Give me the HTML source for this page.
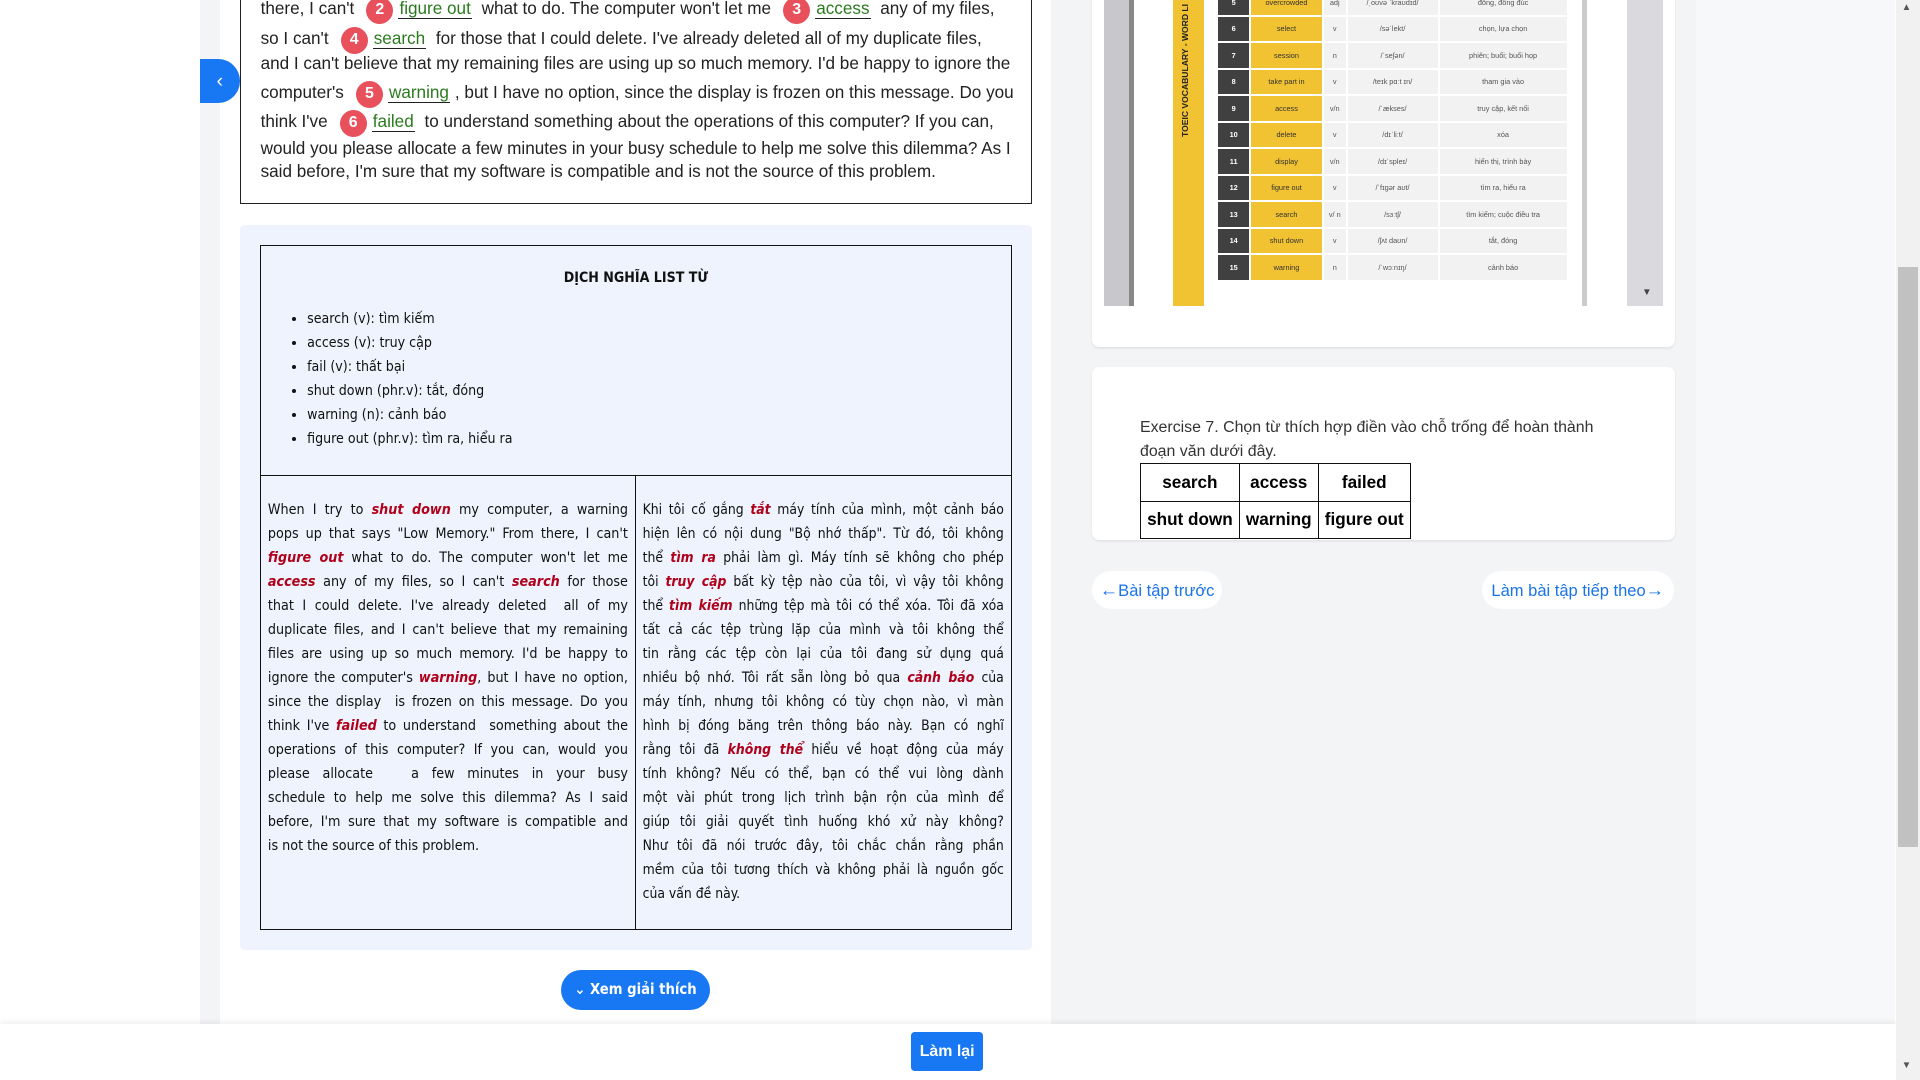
<!DOCTYPE html>
<html><head><meta charset="utf-8">
<style>
html,body{margin:0;padding:0;}
body{width:1920px;height:1080px;overflow:hidden;background:#fff;font-family:"Liberation Sans",sans-serif;}
#w{width:1568px;height:882px;position:relative;zoom:1.2244898;overflow:hidden;background:#fff;}
.abs{position:absolute;}
.gs{background:#f3f4f6;}
.cond{font-family:"DejaVu Sans Condensed","Liberation Sans Narrow","Liberation Sans",sans-serif;}
.pass{left:196px;top:-10px;width:645px;height:176px;border:1px solid #222;border-top:none;background:#fff;}
.pl{position:absolute;left:16px;white-space:nowrap;font-size:14px;line-height:20px;color:#222;}
.num{display:inline-block;width:22px;height:22px;border-radius:50%;background:#e8505b;color:#fff;font-weight:bold;font-size:13px;text-align:center;line-height:22px;margin:0 4px 0 6px;vertical-align:0;}
.ans{color:#2a7a1e;border-bottom:1px solid #222;padding:0 1px;}
.panel{left:196px;top:184px;width:647px;height:592px;background:#eef3fd;border-radius:4px;}
.tbl{left:212px;top:200px;width:613px;height:558px;border:1px solid #111;}
.hdr{position:absolute;left:0;top:0;width:613px;height:187px;border-bottom:1px solid #111;}
.hdr h4{margin:0;position:absolute;top:20px;width:100%;text-align:center;font-size:11.5px;font-weight:bold;color:#111;}
.hdr ul{position:absolute;top:50px;left:20px;margin:0;padding-left:18px;font-size:11.5px;line-height:19.6px;color:#111;}
.col{position:absolute;top:206px;font-size:11.6px;line-height:19.6px;color:#111;}
.col div{text-align:justify;text-align-last:justify;height:19.6px;overflow:hidden;}
.col div.l{text-align-last:left;}
.col b{color:#b0001a;font-style:italic;}
.vline{position:absolute;left:306px;top:188px;width:1px;height:370px;background:#111;}
.btn{background:#1877f2;color:#fff;font-weight:bold;font-size:12px;text-align:center;white-space:nowrap;}
.card{background:#fff;border-radius:6px;box-shadow:0 1px 2px rgba(0,0,0,.08);}
.vt td{height:20px;font-size:6px;text-align:center;color:#555;background:#f2f2f2;border-bottom:2px solid #fff;border-right:2px solid #fff;padding:0;white-space:nowrap;}
.vt td.n{background:#404040;color:#fff;font-weight:bold;width:25px;}
.vt td.y{background:#f1c232;color:#333;width:58px;}
.ex td{border:1px solid #111;font-weight:bold;font-size:14px;text-align:center;padding:0 5px;height:30px;}
.nav{background:#fff;border-radius:16px;color:#1a73e8;font-size:13.5px;line-height:31px;height:31px;text-align:center;white-space:nowrap;}
.nav i{font-style:normal;font-weight:bold;font-size:15px;}
</style></head><body><div id="w">
<div class="abs gs" style="left:163px;top:0;width:17px;height:836px"></div>
<div class="abs gs" style="left:858px;top:0;width:527px;height:836px"></div>
<div class="abs" style="left:1385px;top:0;width:163px;height:836px;background:#f7f8f9"></div>

<div class="abs pass">
<div class="pl" style="top:7px">there, I can't <span class="num">2</span><span class="ans">figure out</span>&nbsp; what to do. The computer won't let me <span class="num">3</span><span class="ans">access</span>&nbsp; any of my files,</div>
<div class="pl" style="top:31px">so I can't <span class="num">4</span><span class="ans">search</span>&nbsp; for those that I could delete. I've already deleted all of my duplicate files,</div>
<div class="pl" style="top:52px">and I can't believe that my remaining files are using up so much memory. I'd be happy to ignore the</div>
<div class="pl" style="top:75px">computer's <span class="num">5</span><span class="ans">warning</span> , but I have no option, since the display is frozen on this message. Do you</div>
<div class="pl" style="top:99px">think I've <span class="num">6</span><span class="ans">failed</span>&nbsp; to understand something about the operations of this computer? If you can,</div>
<div class="pl" style="top:121px">would you please allocate a few minutes in your busy schedule to help me solve this dilemma? As I</div>
<div class="pl" style="top:140px">said before, I'm sure that my software is compatible and is not the source of this problem.</div>
</div>

<div class="abs" style="left:163px;top:48px;width:33px;height:36px;background:#1877f2;border-radius:0 18px 18px 0;color:#fff;font-size:16px;line-height:36px;text-align:center">&#8249;</div>

<div class="abs panel"></div>
<div class="abs tbl cond">
 <div class="hdr"><h4>DỊCH NGHĨA LIST TỪ</h4>
 <ul><li>search (v): tìm kiếm</li><li>access (v): truy cập</li><li>fail (v): thất bại</li><li>shut down (phr.v): tắt, đóng</li><li>warning (n): cảnh báo</li><li>figure out (phr.v): tìm ra, hiểu ra</li></ul></div>
 <div class="vline"></div>
 <div class="col" style="left:6px;width:294px">
<div>When I try to <b>shut down</b> my computer, a warning</div>
<div>pops up that says "Low Memory." From there, I can't</div>
<div><b>figure out</b> what to do. The computer won't let me</div>
<div><b>access</b> any of my files, so I can't <b>search</b> for those</div>
<div>that I could delete. I've already deleted &nbsp;all of my</div>
<div>duplicate files, and I can't believe that my remaining</div>
<div>files are using up so much memory. I'd be happy to</div>
<div>ignore the computer's <b>warning</b>, but I have no option,</div>
<div>since the display &nbsp;is frozen on this message. Do you</div>
<div>think I've <b>failed</b> to understand &nbsp;something about the</div>
<div>operations of this computer? If you can, would you</div>
<div>please allocate &nbsp; a few minutes in your busy</div>
<div>schedule to help me solve this dilemma? As I said</div>
<div>before, I'm sure that my software is compatible and</div>
<div class="l">is not the source of this problem.</div>
 </div>
 <div class="col" style="left:312px;width:295px;font-size:11.3px">
<div>Khi tôi cố gắng <b>tắt</b> máy tính của mình, một cảnh báo</div>
<div>hiện lên có nội dung "Bộ nhớ thấp". Từ đó, tôi không</div>
<div>thể <b>tìm ra</b> phải làm gì. Máy tính sẽ không cho phép</div>
<div>tôi <b>truy cập</b> bất kỳ tệp nào của tôi, vì vậy tôi không</div>
<div>thể <b>tìm kiếm</b> những tệp mà tôi có thể xóa. Tôi đã xóa</div>
<div>tất cả các tệp trùng lặp của mình và tôi không thể</div>
<div>tin rằng các tệp còn lại của tôi đang sử dụng quá</div>
<div>nhiều bộ nhớ. Tôi rất sẵn lòng bỏ qua <b>cảnh báo</b> của</div>
<div>máy tính, nhưng tôi không có tùy chọn nào, vì màn</div>
<div>hình bị đóng băng trên thông báo này. Bạn có nghĩ</div>
<div>rằng tôi đã <b>không thể</b> hiểu về hoạt động của máy</div>
<div>tính không? Nếu có thể, bạn có thể vui lòng dành</div>
<div>một vài phút trong lịch trình bận rộn của mình để</div>
<div>giúp tôi giải quyết tình huống khó xử này không?</div>
<div>Như tôi đã nói trước đây, tôi chắc chắn rằng phần</div>
<div>mềm của tôi tương thích và không phải là nguồn gốc</div>
<div class="l">của vấn đề này.</div>
 </div>
</div>

<div class="abs btn cond" style="left:458px;top:792px;width:122px;height:33px;line-height:33px;border-radius:17px">&#8964; Xem giải thích</div>

<div class="abs card" style="left:892px;top:-6px;width:476px;height:289px"></div>
<div class="abs" style="left:902px;top:0;width:456px;height:250px;background:#fff">
 <div class="abs" style="left:0;top:0;width:24px;height:250px;background:#c8c8cc"></div>
 <div class="abs" style="left:20px;top:0;width:4px;height:250px;background:#888"></div>
 <div class="abs" style="left:427px;top:0;width:29px;height:250px;background:#dadade"></div>
 <div class="abs" style="left:390px;top:0;width:4px;height:250px;background:#ccc"></div>
 <div class="abs" style="left:56px;top:0;width:25px;height:250px;background:#f1c232"></div>
 <div class="abs" style="left:62px;top:112px;font-size:7px;font-weight:bold;transform:rotate(-90deg);transform-origin:0 0;white-space:nowrap;color:#222">TOEIC VOCABULARY - WORD LI</div>
 <div class="abs" style="left:439px;top:234px;font-size:8px;color:#444">&#9660;</div>
 <table class="abs vt" cellspacing="0" style="left:93px;top:-8px;width:286px">
  <tr><td class="n">5</td><td class="y">overcrowded</td><td>adj</td><td>/ˌoʊvə ˈkraʊdɪd/</td><td>đông, đông đúc</td></tr>
  <tr><td class="n">6</td><td class="y">select</td><td>v</td><td>/səˈlekt/</td><td>chọn, lựa chọn</td></tr>
  <tr><td class="n">7</td><td class="y">session</td><td>n</td><td>/ˈseʃən/</td><td>phiên; buổi; buổi họp</td></tr>
  <tr><td class="n">8</td><td class="y">take part in</td><td>v</td><td>/teɪk pɑːt ɪn/</td><td>tham gia vào</td></tr>
  <tr><td class="n">9</td><td class="y">access</td><td>v/n</td><td>/ˈækses/</td><td>truy cập, kết nối</td></tr>
  <tr><td class="n">10</td><td class="y">delete</td><td>v</td><td>/dɪˈliːt/</td><td>xóa</td></tr>
  <tr><td class="n">11</td><td class="y">display</td><td>v/n</td><td>/dɪˈspleɪ/</td><td>hiển thị, trình bày</td></tr>
  <tr><td class="n">12</td><td class="y">figure out</td><td>v</td><td>/ˈfɪɡər aʊt/</td><td>tìm ra, hiểu ra</td></tr>
  <tr><td class="n">13</td><td class="y">search</td><td>v/ n</td><td>/sɜːtʃ/</td><td>tìm kiếm; cuộc điều tra</td></tr>
  <tr><td class="n">14</td><td class="y">shut down</td><td>v</td><td>/ʃʌt daʊn/</td><td>tắt, đóng</td></tr>
  <tr><td class="n">15</td><td class="y">warning</td><td>n</td><td>/ˈwɔːnɪŋ/</td><td>cảnh báo</td></tr>
 </table>
</div>

<div class="abs card" style="left:892px;top:300px;width:476px;height:141px">
 <div class="abs" style="left:39px;top:40px;width:395px;font-size:13px;line-height:19px;color:#333">Exercise 7. Chọn từ thích hợp điền vào chỗ trống để hoàn thành đoạn văn dưới đây.</div>
 <table class="abs ex" cellspacing="0" style="left:39px;top:78px;border-collapse:collapse">
  <tr><td>search</td><td>access</td><td>failed</td></tr>
  <tr><td>shut down</td><td>warning</td><td>figure out</td></tr>
 </table>
</div>

<div class="abs nav" style="left:892px;top:466px;width:106px"><i>&#x2190;</i>Bài tập trước</div>
<div class="abs nav" style="left:1210px;top:466px;width:157px">Làm bài tập tiếp theo<i>&#x2192;</i></div>

<div class="abs" style="left:0;top:836px;width:1548px;height:46px;background:#fff;box-shadow:0 -2px 4px rgba(0,0,0,.06)"></div>
<div class="abs btn" style="left:744px;top:843px;width:59px;height:32px;line-height:32px;border-radius:3px;font-size:13px">Làm lại</div>

<div class="abs" style="left:1548px;top:0;width:20px;height:882px;background:#f1f1f1"></div>
<div class="abs" style="left:1550px;top:218px;width:16px;height:474px;background:#c1c1c1"></div>
<div class="abs" style="left:1553px;top:866px;font-size:8px;color:#555">&#9660;</div>
<div class="abs" style="left:1553px;top:2px;font-size:8px;color:#555">&#9650;</div>
</div></body></html>
